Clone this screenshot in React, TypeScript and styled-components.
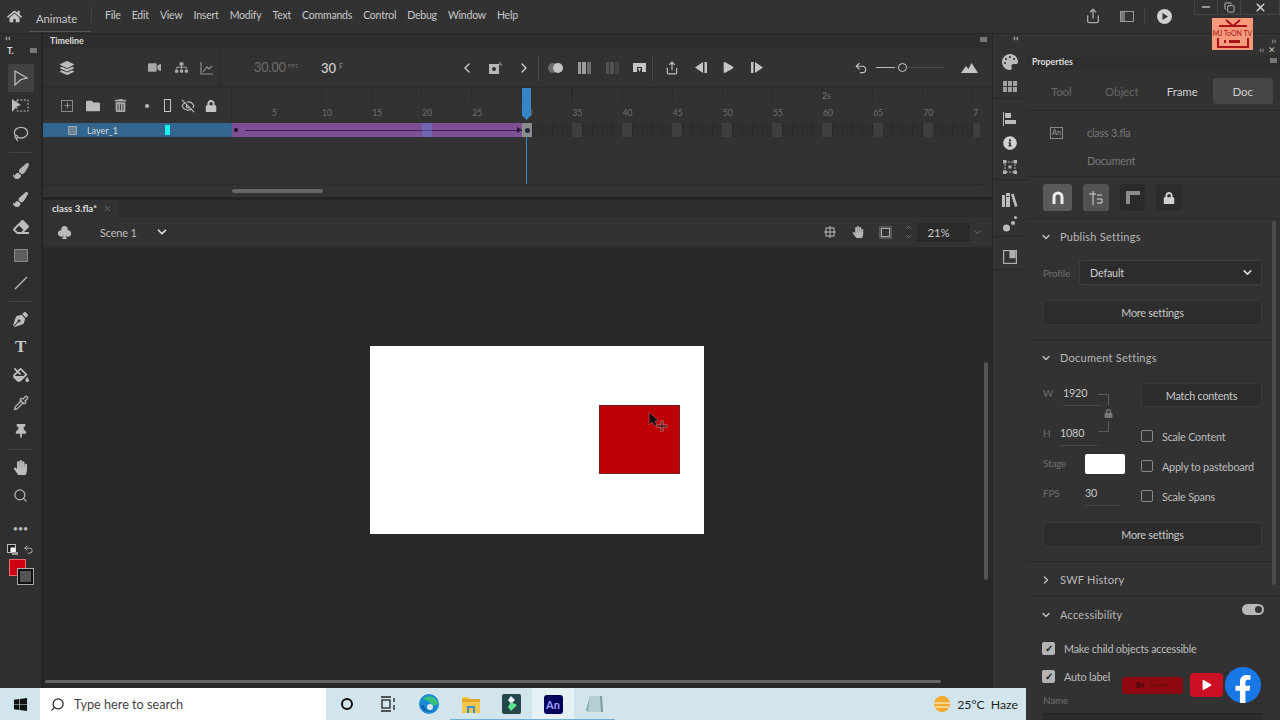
import React from 'react';
import styled, { createGlobalStyle } from 'styled-components';
import {
  ChevronDown, ChevronLeft, ChevronRight, ChevronUp, Copy, EyeOff, Lasso, Minus, Pipette, Plus, Search, Share, Undo2, X,
} from 'lucide-react';
import {
  FaEraser, FaFillDrip, FaFolder, FaHandPaper, FaInfoCircle, FaLayerGroup, FaLock, FaPaintBrush,
  FaPalette, FaPenNib, FaPlay, FaSitemap, FaThumbtack, FaTrashAlt, FaVideo, FaWindows, FaHome,
  FaFacebookF,
} from 'react-icons/fa';
import { BsSuitClubFill } from 'react-icons/bs';

const GlobalStyle = createGlobalStyle`
  html, body {
    margin: 0;
    padding: 0;
    background: #323232;
    overflow: hidden;
  }
  #root {
    width: 1280px;
    height: 720px;
  }
  * {
    box-sizing: border-box;
  }
`;

const labels = [5, 10, 15, 20, 25, 30, 35, 40, 45, 50, 55, 60, 65, 70, 7];
const menus = ['File', 'Edit', 'View', 'Insert', 'Modify', 'Text', 'Commands', 'Control', 'Debug', 'Window', 'Help'];

const ArrowIcon = () => (
  <svg width="16" height="18" viewBox="0 0 16 18" fill="none" stroke="#c4c4c4" strokeWidth="1.2">
    <path d="M2 2 L14 9 L8 10.5 L2 16 Z" />
  </svg>
);
const TransformIcon = () => (
  <svg width="18" height="16" viewBox="0 0 18 16">
    <path d="M0 1 L9 7 L5 8.5 L0 14 Z" fill="#bcbcbc" />
    <rect x="5" y="2" width="11" height="11" fill="none" stroke="#bcbcbc" strokeDasharray="2 1.5" />
  </svg>
);
const GraphIcon = () => (
  <svg width="14" height="14" viewBox="0 0 14 14" fill="none" stroke="#8f8f8f" strokeWidth="1.2">
    <path d="M1 1 V13 H13 M3 11 L7 6 L9 8 L12 5" />
  </svg>
);
const LineIcon = () => (
  <svg width="14" height="14" viewBox="0 0 14 14" stroke="#bcbcbc" strokeWidth="1.2"><path d="M1 13 L13 1" /></svg>
);
const SwapIcon = () => (
  <svg width="12" height="12" viewBox="0 0 12 12">
    <rect x="0.5" y="0.5" width="8" height="8" fill="#222" stroke="#bbb" />
    <rect x="3.5" y="3.5" width="5" height="5" fill="#fff" />
    <rect x="5" y="8" width="6" height="3" fill="#999" />
  </svg>
);
const SwatchGrid = () => (
  <svg width="14" height="11" viewBox="0 0 14 11" fill="#a0a0a0">
    <rect width="4" height="5" /><rect x="5" width="4" height="5" /><rect x="10" width="4" height="5" />
    <rect y="6" width="4" height="5" /><rect x="5" y="6" width="4" height="5" /><rect x="10" y="6" width="4" height="5" />
  </svg>
);
const AlignIcon = () => (
  <svg width="13" height="14" viewBox="0 0 13 14" fill="#bcbcbc">
    <rect width="1" height="14" /><rect x="2" y="1" width="6" height="5" /><rect x="2" y="8" width="11" height="4" />
  </svg>
);
const FrameIcon = () => (
  <svg width="14" height="14" viewBox="0 0 14 14" fill="none" stroke="#b0b0b0">
    <rect x="2" y="2" width="10" height="10" strokeDasharray="2 1" />
    <rect x="0" y="0" width="3" height="3" fill="#b0b0b0" /><rect x="11" y="0" width="3" height="3" fill="#b0b0b0" />
    <rect x="0" y="11" width="3" height="3" fill="#b0b0b0" /><rect x="11" y="11" width="3" height="3" fill="#b0b0b0" />
    <rect x="6" y="6" width="2" height="2" fill="#b0b0b0" />
  </svg>
);
const LibraryIcon = () => (
  <svg width="16" height="14" viewBox="0 0 16 14" fill="#bcbcbc">
    <rect y="2" width="3" height="12" /><rect x="4" y="0" width="4" height="14" />
    <path d="M9 1.5 L11.5 0.5 L15.5 13 L13 14 Z" />
    <rect x="4.8" y="3" width="2.4" height="1" fill="#323232" />
  </svg>
);
const DotsIcon = () => (
  <svg width="14" height="16" viewBox="0 0 14 16" fill="#bcbcbc">
    <circle cx="3.5" cy="12" r="3.5" /><circle cx="10" cy="7" r="2" /><circle cx="12.5" cy="1.5" r="1.5" />
  </svg>
);
const RefIcon = () => (
  <svg width="14" height="14" viewBox="0 0 14 14" fill="none" stroke="#b0b0b0" strokeWidth="1.2">
    <rect x="0.6" y="0.6" width="12.8" height="12.8" /><rect x="7" y="0.6" width="5" height="7" fill="#b0b0b0" />
  </svg>
);
const MountainIcon = () => (
  <svg width="17" height="10" viewBox="0 0 17 10" fill="#c4c4c4"><path d="M0 10 L5 3 L7.5 6 L10.5 0 L17 10 Z" /></svg>
);
const LoopIcon = () => (
  <svg width="13" height="10" viewBox="0 0 13 10" fill="#c4c4c4">
    <path d="M0 0 H13 V9 H9 V4 H4 V9 H0 Z M5 5 H8 L6.5 9 Z" />
  </svg>
);
const OnionIcon = () => (
  <svg width="16" height="10" viewBox="0 0 16 10">
    <circle cx="5" cy="5" r="5" fill="#6a6a6a" /><circle cx="10" cy="5" r="5" fill="#c4c4c4" />
  </svg>
);
const EditFramesIcon = () => (
  <svg width="13" height="12" viewBox="0 0 13 12" fill="#9a9a9a">
    <rect width="3" height="12" /><rect x="4" width="4" height="12" /><rect x="9" width="4" height="12" fill="#6c6c6c" />
  </svg>
);
const StepIcon = ({ flip }: { flip?: boolean }) => (
  <svg width="12" height="11" viewBox="0 0 12 11" fill="#c4c4c4" style={flip ? { transform: 'scaleX(-1)' } : undefined}>
    <rect width="2.5" height="11" /><path d="M4 0 L12 5.5 L4 11 Z" />
  </svg>
);
const KeyAddIcon = () => (
  <svg width="14" height="14" viewBox="0 0 14 14" fill="#b8b8b8">
    <rect y="3" width="10" height="10" /><circle cx="5" cy="8" r="2" fill="#323232" />
    <text x="9" y="5" fontSize="6" fontFamily="Lato, sans-serif">A</text>
  </svg>
);
const PanelIcon = () => (
  <svg width="14" height="11" viewBox="0 0 14 11"><rect x="0.5" y="0.5" width="13" height="10" fill="none" stroke="#999" /><rect x="1" y="1" width="4" height="9" fill="#777" /></svg>
);
const PlayCircle = () => (
  <svg width="15" height="15" viewBox="0 0 15 15"><circle cx="7.5" cy="7.5" r="7.5" fill="#d0d0d0" /><path d="M5.5 4 L11 7.5 L5.5 11 Z" fill="#323232" /></svg>
);
const MagnetIcon = () => (
  <svg width="12" height="13" viewBox="0 0 12 13" fill="none" stroke="#eee" strokeWidth="3"><path d="M2 13 V6 A4 4 0 0 1 10 6 V13" /></svg>
);
const SnapIcon = () => (
  <svg width="14" height="14" viewBox="0 0 14 14" fill="none" stroke="#d8d8d8"><path d="M4 0 V14 M0 3 H7 M8 4 H13 M8 8 H13 V12 H8" /></svg>
);
const RulerIcon = () => (
  <svg width="14" height="13" viewBox="0 0 14 13" fill="#8c8c8c"><path d="M0 0 H14 V4 H4 V13 H0 Z" /></svg>
);
const GuideIcon = () => (
  <svg width="12" height="12" viewBox="0 0 12 12" fill="none" stroke="#b4b4b4" strokeWidth="1.1">
    <rect x="2" y="2" width="8" height="8" /><path d="M6 0 V12 M0 6 H12" />
  </svg>
);
const LinkBracket = () => (
  <svg width="14" height="38" viewBox="0 0 14 38" fill="none" stroke="#5c5c5c"><path d="M0 0.5 H10.5 V11 M10.5 27 V37.5 H0" /></svg>
);
const CursorIcon = () => (
  <svg width="22" height="22" viewBox="0 0 22 22">
    <path d="M1 1 L1 14 L4 11 L7 15 L9 14 L7 10 L11 10 Z" fill="#111" stroke="#d75a66" strokeWidth="0.6" />
    <path d="M14 9.5 V20.5 M8.5 15 H19.5" stroke="#e07a80" strokeWidth="3" />
    <path d="M14 10 V20 M9 15 H19" stroke="#3a1a1a" strokeWidth="1.3" />
  </svg>
);
const EdgeIcon = () => (
  <svg width="20" height="20" viewBox="0 0 20 20">
    <circle cx="10" cy="10" r="10" fill="#1a8ad6" />
    <path d="M4 5 C8 0 17 2 19 9 C19 12 13 12 12 10 C11 7 6 6 4 5 Z" fill="#35c27a" />
    <path d="M5 11 C5 16 11 19 17 16 C13 19 3 19 2 11 Z" fill="#0c5fa8" />
    <circle cx="11" cy="13" r="3" fill="#d5e8ef" />
  </svg>
);
const FolderColor = () => (
  <svg width="18" height="17" viewBox="0 0 18 17">
    <path d="M0 1 H7 L8 3 H18 V17 H0 Z" fill="#f4c84f" /><rect y="3" width="18" height="3" fill="#e0a92e" />
    <path d="M5 17 V10 H13 V17 H11 V12 H7 V17 Z" fill="#3d8fce" />
  </svg>
);
const FilmoraIcon = () => (
  <svg width="19" height="20" viewBox="0 0 19 20">
    <rect width="19" height="20" rx="2" fill="#23474a" />
    <path d="M9 2 L13 6 L9 10 L6 6 Z" fill="#eef" /><path d="M9 8 L15 11 L9 17 L6 13 Z" fill="#5fe38b" />
  </svg>
);
const NoteIcon = () => (
  <svg width="18" height="19" viewBox="0 0 18 19">
    <path d="M4 1 H16 L17 17 L2 17 Z" fill="#b4ced2" /><path d="M4 1 L0 15 L2 17 Z" fill="#7fa7ad" /><path d="M14 1 H16 L17 17 H15 Z" fill="#7e9ba0" />
  </svg>
);
const WeatherIcon = () => (
  <svg width="18" height="17" viewBox="0 0 18 17">
    <circle cx="9" cy="8" r="8" fill="#f3a92c" />
    <path d="M1 7 H17 M2 11 H16" stroke="#f7e2a8" strokeWidth="1.6" />
  </svg>
);
const TaskViewIcon = () => (
  <svg width="16" height="16" viewBox="0 0 16 16" fill="none" stroke="#222" strokeWidth="1.3">
    <rect x="2" y="4" width="8" height="8" /><path d="M1 1 H11 M1 15 H11 M14 2 V6 M14 9 V14" />
  </svg>
);
const TvIcon = () => (
  <svg width="36" height="30" viewBox="0 0 36 30" fill="none" stroke="#a8121a" strokeWidth="2">
    <path d="M11 1 L18 7 L25 1 M4 7 H32 M3 19 V28 H33 V19" />
    <rect x="9" y="21" width="2" height="3" fill="#a8121a" stroke="none" />
    <rect x="14" y="21" width="11" height="3" fill="#a8121a" stroke="none" />
  </svg>
);

function App() {
  return (
    <Page>
      <GlobalStyle />
      <MenuBar>
        <HomeSlot><FaHome size={15} color="#c4c4c4" /></HomeSlot>
        <AppName>Animate</AppName>
        <MenuList>
          {menus.map((m) => <MenuItem key={m}>{m}</MenuItem>)}
        </MenuList>
        <MenuActions>
          <Slot $w={34}><Share size={16} color="#aaa" /></Slot>
          <Slot $w={34}><PanelIcon /></Slot>
          <BarSep $h={18} />
          <Slot $w={39}><PlayCircle /></Slot>
        </MenuActions>
        <WindowButtons>
          <WinBtn><Minus size={12} color="#bbb" strokeWidth={3} /></WinBtn>
          <WinBtn><Copy size={11} color="#bbb" strokeWidth={2} /></WinBtn>
          <WinBtn $wide><X size={13} color="#ccc" strokeWidth={3} /></WinBtn>
        </WindowButtons>
        <Logo>
          <TvIcon />
          <LogoText>MJ ToON TV</LogoText>
        </Logo>
      </MenuBar>

      <Body>
        <LeftArea>
          <Workspace>
            <Tools>
              <CollapseMark $pad={5}>‹‹</CollapseMark>
              <ToolsHead><span>T.</span><GripBox /></ToolsHead>
              <Tool $active><ArrowIcon /></Tool>
              <Tool><TransformIcon /></Tool>
              <Tool><Lasso size={16} color="#b4b4b4" /></Tool>
              <ToolSep />
              <Tool><FaPaintBrush size={16} color="#b4b4b4" /></Tool>
              <Tool><FaPaintBrush size={15} color="#bcbcbc" /></Tool>
              <Tool><FaEraser size={16} color="#bcbcbc" /></Tool>
              <Tool><RectSwatch /></Tool>
              <Tool><LineIcon /></Tool>
              <ToolSep $tight />
              <Tool><FaPenNib size={15} color="#bcbcbc" /></Tool>
              <Tool><ToolT>T</ToolT></Tool>
              <Tool><FaFillDrip size={16} color="#bcbcbc" /></Tool>
              <Tool><Pipette size={16} color="#b4b4b4" /></Tool>
              <Tool><FaThumbtack size={14} color="#bcbcbc" /></Tool>
              <ToolSep $tight />
              <Tool><FaHandPaper size={15} color="#bcbcbc" /></Tool>
              <Tool><Search size={15} color="#b4b4b4" /></Tool>
              <MoreDots>•••</MoreDots>
              <SwapRow><SwapIcon /><Undo2 size={11} color="#bbb" /></SwapRow>
              <Swatches>
                <FillBox />
                <StrokeBox />
              </Swatches>
            </Tools>

            <Center>
              <Timeline>
                <PanelTab>
                  <TabLabel>Timeline</TabLabel>
                  <GripBox />
                </PanelTab>
                <TimeBar>
                  <Slot $w={48}><FaLayerGroup size={14} color="#bbb" /></Slot>
                  <Spacer $w={49} />
                  <Slot $w={28}><FaVideo size={13} color="#a8a8a8" /></Slot>
                  <Slot $w={26}><FaSitemap size={13} color="#a8a8a8" /></Slot>
                  <Slot $w={26}><GraphIcon /></Slot>
                  <FpsBlock>
                    <FpsValue>30.00<small>FPS</small></FpsValue>
                    <FrameValue>30<small>F</small></FrameValue>
                  </FpsBlock>
                  <Slot $w={28}><ChevronLeft size={16} color="#ccc" /></Slot>
                  <Slot $w={29}><KeyAddIcon /></Slot>
                  <Slot $w={28}><ChevronRight size={16} color="#ccc" /></Slot>
                  <BarSep />
                  <Spacer $w={2} />
                  <Slot $w={29}><OnionIcon /></Slot>
                  <Slot $w={28}><EditFramesIcon /></Slot>
                  <Slot $w={28} $dim><EditFramesIcon /></Slot>
                  <Slot $w={26}><LoopIcon /></Slot>
                  <BarSep />
                  <Spacer $w={4} />
                  <Slot $w={30}><Share size={14} color="#c4c4c4" /></Slot>
                  <Slot $w={28}><StepIcon flip /></Slot>
                  <Slot $w={27}><FaPlay size={11} color="#c4c4c4" /></Slot>
                  <Slot $w={29}><StepIcon /></Slot>
                  <Spacer $w={75} />
                  <Slot $w={30}><Undo2 size={14} color="#c4c4c4" /></Slot>
                  <ZoomSlider><ZoomKnob /></ZoomSlider>
                  <Spacer $w={10} />
                  <Slot $w={28}><MountainIcon /></Slot>
                </TimeBar>
                <RulerRow>
                  <LayerTools>
                    <Slot $w={26}><PlusBox><Plus size={9} color="#aaa" /></PlusBox></Slot>
                    <Slot $w={26}><FaFolder size={14} color="#bbb" /></Slot>
                    <Slot $w={28}><FaTrashAlt size={13} color="#a8a8a8" /></Slot>
                    <Slot $w={26}><TinyDot /></Slot>
                    <Slot $w={14}><TallRect /></Slot>
                    <Slot $w={28}><EyeOff size={14} color="#bbb" /></Slot>
                    <Slot $w={18}><FaLock size={12} color="#c4c4c4" /></Slot>
                  </LayerTools>
                  <Ruler>
                    <SecondsMark>2s</SecondsMark>
                    <RulerLabels>
                      {labels.map((n, i) => <RulerLabel key={i}>{n}</RulerLabel>)}
                    </RulerLabels>
                  </Ruler>
                </RulerRow>
                <LayerRow>
                  <LayerName>
                    <LayerGlyph />
                    <span>Layer_1</span>
                    <LayerColor />
                  </LayerName>
                  <Tween>
                    <TweenDot />
                    <TweenLine />
                    <TweenHighlight />
                  </Tween>
                  <Keyframe><KeyDot /></Keyframe>
                  <EmptyFrames />
                </LayerRow>
                <Playhead />
                <TimelineFoot>
                  <HScrollThumb />
                </TimelineFoot>
              </Timeline>

              <StagePanel>
                <DocTabs>
                  <DocTab>class 3.fla*<X size={9} color="#777" /></DocTab>
                </DocTabs>
                <SceneBar>
                  <Slot $w={42}><BsSuitClubFill size={15} color="#bbb" /></Slot>
                  <SceneName>Scene 1</SceneName>
                  <ChevronDown size={14} color="#ddd" strokeWidth={3} />
                  <SceneRight>
                    <Slot $w={28}><GuideIcon /></Slot>
                    <Slot $w={27}><FaHandPaper size={12} color="#b4b4b4" /></Slot>
                    <Slot $w={28}><ClipBox /></Slot>
                    <Slot $w={18}><Steppers><ChevronUp size={9} color="#888" /><ChevronDown size={9} color="#888" /></Steppers></Slot>
                    <ZoomField>21%</ZoomField>
                    <Slot $w={14}><ChevronDown size={11} color="#777" /></Slot>
                  </SceneRight>
                </SceneBar>
                <Canvas>
                  <Artboard>
                    <RedBox />
                    <Cursor><CursorIcon /></Cursor>
                  </Artboard>
                  <CanvasVScroll />
                  <CanvasHScroll />
                </Canvas>
              </StagePanel>
            </Center>

            <Strip>
              <CollapseMark $pad={20}>‹‹</CollapseMark>
              <StripGroup>
                <StripIcon><FaPalette size={16} color="#bcbcbc" /></StripIcon>
                <StripIcon><SwatchGrid /></StripIcon>
              </StripGroup>
              <StripGroup>
                <StripIcon><AlignIcon /></StripIcon>
                <StripIcon><FaInfoCircle size={14} color="#d0d0d0" /></StripIcon>
                <StripIcon><FrameIcon /></StripIcon>
              </StripGroup>
              <StripGroup>
                <StripIcon><LibraryIcon /></StripIcon>
                <StripIcon><DotsIcon /></StripIcon>
              </StripGroup>
              <StripGroup>
                <StripIcon><RefIcon /></StripIcon>
              </StripGroup>
            </Strip>
          </Workspace>

          <Taskbar>
            <WinSlot><FaWindows size={15} color="#111" /></WinSlot>
            <SearchBox>
              <Search size={15} color="#222" style={{ transform: 'scaleX(-1)' }} />
              <span>Type here to search</span>
            </SearchBox>
            <TaskIcon $w={42}><CortanaRing /></TaskIcon>
            <TaskIcon $w={40}><TaskViewIcon /></TaskIcon>
            <TaskIcon $w={42}><EdgeIcon /></TaskIcon>
            <TaskIcon $w={41} $open><FolderColor /></TaskIcon>
            <TaskIcon $w={41} $open><FilmoraIcon /></TaskIcon>
            <TaskIcon $w={42} $open $active><AnBadge>An</AnBadge></TaskIcon>
            <TaskIcon $w={41} $open><NoteIcon /></TaskIcon>
            <Tray>
              <WeatherIcon />
              <span>25°C</span>
              <span>Haze</span>
            </Tray>
          </Taskbar>
        </LeftArea>

        <Properties>
          <PropTop>
            <span>››</span>
            <span>‹‹ &nbsp;✕</span>
          </PropTop>
          <PropTitle>
            <TabLabel>Properties</TabLabel>
            <GripBox />
          </PropTitle>
          <Tabs>
            <PropTab $dim>Tool</PropTab>
            <PropTab $dim>Object</PropTab>
            <PropTab>Frame</PropTab>
            <PropTab $active>Doc</PropTab>
          </Tabs>
          <DocInfo>
            <DocFileRow>
              <AnOutline>An</AnOutline>
              <MutedText>class 3.fla</MutedText>
            </DocFileRow>
            <DocKind>Document</DocKind>
          </DocInfo>
          <SnapRow>
            <SnapBtn $w={29} $bg="#5a5a5a"><MagnetIcon /></SnapBtn>
            <SnapBtn $w={26} $bg="#525252"><SnapIcon /></SnapBtn>
            <SnapBtn $w={25} $bg="#2a2a2a"><RulerIcon /></SnapBtn>
            <SnapBtn $w={26} $bg="#2c2c2c"><FaLock size={12} color="#d0d0d0" /></SnapBtn>
          </SnapRow>

          <Section $h={121}>
            <SectionHead><ChevronDown size={12} color="#bbb" strokeWidth={3} />Publish Settings</SectionHead>
            <ProfileRow>
              <FieldLabel>Profile</FieldLabel>
              <SelectBox>Default<ChevronDown size={13} color="#ddd" strokeWidth={3} /></SelectBox>
            </ProfileRow>
            <WideButton>More settings</WideButton>
          </Section>

          <Section $h={222}>
            <SectionHead><ChevronDown size={12} color="#bbb" strokeWidth={3} />Document Settings</SectionHead>
            <DocGrid>
              <FieldCell>
                <FieldLabel $w={20}>W</FieldLabel>
                <Underlined $w={38}>1920</Underlined>
              </FieldCell>
              <MatchButton>Match contents</MatchButton>
              <FieldCell $top={2}>
                <FieldLabel $w={17}>H</FieldLabel>
                <Underlined $w={38}>1080</Underlined>
              </FieldCell>
              <CheckRow><CheckBox />Scale Content</CheckRow>
              <FieldCell $top={2}>
                <FieldLabel $w={42}>Stage</FieldLabel>
                <StageColor />
              </FieldCell>
              <CheckRow><CheckBox />Apply to pasteboard</CheckRow>
              <FieldCell $top={2}>
                <FieldLabel $w={42}>FPS</FieldLabel>
                <Underlined $w={36}>30</Underlined>
              </FieldCell>
              <CheckRow><CheckBox />Scale Spans</CheckRow>
              <LinkMark><LinkBracket /><LockMark><FaLock size={9} color="#777" /></LockMark></LinkMark>
            </DocGrid>
            <WideButton>More settings</WideButton>
          </Section>

          <Section $h={35}>
            <SectionHead><ChevronRight size={12} color="#bbb" strokeWidth={3} />SWF History</SectionHead>
          </Section>

          <AccessSection>
            <SectionHead>
              <ChevronDown size={12} color="#bbb" strokeWidth={3} />Accessibility
              <Toggle />
            </SectionHead>
            <AccessRow><CheckedBox>✓</CheckedBox>Make child objects accessible</AccessRow>
            <AccessRow><CheckedBox>✓</CheckedBox>Auto label</AccessRow>
            <NameLabel>Name</NameLabel>
            <NameBox />
          </AccessSection>
          <PropScroll />

          <Socials>
            <SubscribePill><FaVideo size={8} color="#5a0a0c" /><span>Subscribe</span></SubscribePill>
            <YoutubeBox><FaPlay size={10} color="#fff" /></YoutubeBox>
            <FacebookBall><FaFacebookF size={28} color="#fff" /></FacebookBall>
          </Socials>
        </Properties>
      </Body>
    </Page>
  );
}

export default App;

const Page = styled.div`
  width: 1280px;
  height: 720px;
  display: flex;
  flex-direction: column;
  background: #323232;
  font-family: Lato, "Liberation Sans", sans-serif;
  color: #c8c8c8;
  font-size: 10.8px;
  letter-spacing: -0.2px;
  position: relative;
  overflow: hidden;
`;

const MenuBar = styled.div`
  height: 33px;
  flex: none;
  display: flex;
  align-items: center;
  position: relative;
  background: #323232;
`;

const HomeSlot = styled.div`
  width: 29px;
  display: flex;
  justify-content: center;
`;

const AppName = styled.div`
  width: 62px;
  padding-left: 7px;
  font-size: 11.4px;
  letter-spacing: -0.1px;
  color: #c4c4c4;
  padding-top: 3px;
  height: 31px;
  line-height: 29px;
  border-bottom: 1px solid #555;
`;

const MenuList = styled.div`
  display: flex;
  gap: 11px;
  padding-left: 13px;
  height: 16px;
  margin-bottom: 3px;
  align-items: center;
  border-left: 1px solid #444;
`;

const MenuItem = styled.span`
  font-size: 10.5px;
  color: #c8c8c8;
`;

const MenuActions = styled.div`
  position: absolute;
  left: 1076px;
  top: 7px;
  display: flex;
  align-items: center;
`;

const WindowButtons = styled.div`
  position: absolute;
  right: 0;
  top: 0;
  height: 15px;
  display: flex;
  border: 1px solid #444;
  border-top: none;
  border-right: none;
`;

const WinBtn = styled.div<{ $wide?: boolean }>`
  width: ${(p) => (p.$wide ? 39 : 23)}px;
  display: flex;
  align-items: center;
  justify-content: center;
  border-right: 1px solid #444;
`;

const Logo = styled.div`
  position: absolute;
  left: 1212px;
  top: 18px;
  width: 41px;
  height: 32px;
  background: #f79a7c;
  z-index: 5;
  display: flex;
  align-items: center;
  justify-content: center;
`;

const LogoText = styled.span`
  position: absolute;
  left: 0;
  right: 0;
  top: 11px;
  text-align: center;
  color: #a8121a;
  font-size: 7px;
  letter-spacing: 0;
  white-space: nowrap;
`;

const Body = styled.div`
  flex: 1;
  display: flex;
  min-height: 0;
`;

const LeftArea = styled.div`
  width: 1026px;
  display: flex;
  flex-direction: column;
`;

const Workspace = styled.div`
  height: 655px;
  display: flex;
  border-top: 1px solid #262626;
`;

const Tools = styled.div`
  width: 43px;
  flex: none;
  display: flex;
  flex-direction: column;
  align-items: center;
  background: #2f2f2f;
  border-right: 2px solid #252525;
`;

const CollapseMark = styled.div<{ $pad: number }>`
  height: 9px;
  width: 100%;
  padding-left: ${(p) => p.$pad}px;
  line-height: 7px;
  font-size: 10px;
  font-weight: 700;
  color: #b4b4b4;
`;

const ToolsHead = styled.div`
  width: 100%;
  height: 21px;
  padding: 2px 4px 0 7px;
  display: flex;
  align-items: flex-start;
  justify-content: space-between;
  font-size: 9px;
  font-weight: 700;
  color: #ddd;
`;

const GripBox = styled.div`
  width: 7px;
  height: 5px;
  margin-top: 3px;
  background: #777;
`;

const Tool = styled.div<{ $active?: boolean }>`
  width: 26px;
  height: 28px;
  flex: none;
  display: flex;
  align-items: center;
  justify-content: center;
  border-radius: 2px;
  background: ${(p) => (p.$active ? '#424242' : 'transparent')};
`;

const ToolSep = styled.div<{ $tight?: boolean }>`
  width: 24px;
  height: 1px;
  flex: none;
  margin: 4px 0 ${(p) => (p.$tight ? 3 : 4)}px;
  background: #444;
`;

const ToolT = styled.span`
  font-family: "Liberation Serif", serif;
  font-size: 17px;
  font-weight: 700;
  color: #c8c8c8;
`;

const RectSwatch = styled.div`
  width: 14px;
  height: 13px;
  background: #5f5f5f;
  border: 1px solid #888;
`;

const MoreDots = styled.div`
  height: 28px;
  margin-top: 6px;
  font-size: 9px;
  line-height: 28px;
  color: #bbb;
  letter-spacing: 0;
`;

const SwapRow = styled.div`
  display: flex;
  gap: 4px;
  height: 13px;
  align-items: center;
`;

const Swatches = styled.div`
  position: relative;
  width: 30px;
  height: 30px;
  margin-top: 3px;
`;

const FillBox = styled.div`
  position: absolute;
  left: 3px;
  top: 0;
  width: 17px;
  height: 17px;
  background: #cf0012;
  border: 1px solid #e66;
`;

const StrokeBox = styled.div`
  position: absolute;
  left: 11px;
  top: 9px;
  width: 17px;
  height: 17px;
  background: #555;
  border: 3px solid #111;
  outline: 1px solid #aaa;
  outline-offset: -1px;
`;

const Center = styled.div`
  width: 950px;
  flex: none;
  display: flex;
  flex-direction: column;
  border-right: 1px solid #252525;
`;

const Timeline = styled.div`
  height: 166px;
  flex: none;
  position: relative;
  display: flex;
  flex-direction: column;
  background: #323232;
  border-bottom: 3px solid #232323;
`;

const PanelTab = styled.div`
  height: 14px;
  display: flex;
  justify-content: space-between;
  padding: 0 5px 0 7px;
  background: #2e2e2e;
  flex: none;
`;

const TabLabel = styled.span`
  font-size: 8.8px;
  letter-spacing: 0;
  font-weight: 700;
  color: #ddd;
  line-height: 13px;
`;

const TimeBar = styled.div`
  height: 40px;
  flex: none;
  display: flex;
  align-items: center;
  border-bottom: 1px solid #2a2a2a;
`;

const Slot = styled.div<{ $w: number; $dim?: boolean }>`
  width: ${(p) => p.$w}px;
  flex: none;
  display: flex;
  align-items: center;
  justify-content: center;
  opacity: ${(p) => (p.$dim ? 0.3 : 1)};
`;

const Spacer = styled.div<{ $w: number }>`
  width: ${(p) => p.$w}px;
  flex: none;
`;

const FpsBlock = styled.div`
  width: 233px;
  flex: none;
  height: 100%;
  padding-left: 33px;
  display: flex;
  align-items: center;
  gap: 24px;
  border-left: 1px solid #2a2a2a;
`;

const FpsValue = styled.span`
  font-size: 12.5px;
  letter-spacing: 0;
  color: #6e6e6e;
  width: 43px;
  white-space: nowrap;
  small {
    font-size: 6px;
    margin-left: 2px;
    vertical-align: 4px;
  }
`;

const FrameValue = styled.span`
  font-size: 13px;
  letter-spacing: 0;
  font-weight: 500;
  color: #d4d4d4;
  small {
    font-size: 7px;
    margin-left: 3px;
    color: #888;
    vertical-align: 4px;
  }
`;

const BarSep = styled.div<{ $h?: number }>`
  width: 1px;
  height: ${(p) => p.$h ?? 26}px;
  flex: none;
  background: #474747;
`;

const ZoomSlider = styled.div`
  width: 69px;
  height: 1px;
  flex: none;
  position: relative;
  background: linear-gradient(90deg, #bbb 0 28%, #4a4a4a 28% 100%);
`;

const ZoomKnob = styled.div`
  position: absolute;
  left: 22px;
  top: -4px;
  width: 9px;
  height: 9px;
  border-radius: 50%;
  border: 1.5px solid #ccc;
  background: #323232;
`;

const RulerRow = styled.div`
  height: 35px;
  flex: none;
  display: flex;
`;

const LayerTools = styled.div`
  width: 189px;
  flex: none;
  padding: 0 0 0 11px;
  display: flex;
  align-items: center;
  border-right: 1px solid #292929;
`;

const PlusBox = styled.div`
  width: 12px;
  height: 12px;
  border: 1px solid #888;
  display: flex;
  align-items: center;
  justify-content: center;
`;

const TinyDot = styled.div`
  width: 4px;
  height: 4px;
  border-radius: 50%;
  background: #bbb;
`;

const TallRect = styled.div`
  width: 7px;
  height: 13px;
  border: 1.5px solid #c4c4c4;
`;

const Ruler = styled.div`
  flex: 1;
  position: relative;
  background: repeating-linear-gradient(90deg, transparent 0 49px, #2b2b2b 49px 50.1px) 40px 0 / auto 14px no-repeat;
`;

const SecondsMark = styled.span`
  position: absolute;
  left: 590px;
  top: 3px;
  font-size: 8.5px;
  letter-spacing: 0;
  color: #777;
`;

const RulerLabels = styled.div`
  position: absolute;
  left: 40px;
  top: 20px;
  display: flex;
`;

const RulerLabel = styled.span`
  width: 50.1px;
  flex: none;
  font-size: 8.5px;
  letter-spacing: 0;
  color: #707070;
`;

const LayerRow = styled.div`
  height: 14px;
  flex: none;
  display: flex;
`;

const LayerName = styled.div`
  width: 189px;
  flex: none;
  display: flex;
  align-items: center;
  padding-left: 25px;
  background: #33668f;
  font-size: 9px;
  letter-spacing: 0;
  color: #d8d8d8;
`;

const LayerGlyph = styled.div`
  width: 9px;
  height: 9px;
  margin-right: 10px;
  background: #6d8497;
  border: 1px solid #9aa;
`;

const LayerColor = styled.div`
  width: 5px;
  height: 10px;
  margin-left: 47px;
  background: #1cf2ee;
`;

const Tween = styled.div`
  width: 290px;
  flex: none;
  position: relative;
  background: #7e4f96;
`;

const TweenDot = styled.div`
  position: absolute;
  left: 2px;
  top: 5px;
  width: 4px;
  height: 4px;
  border-radius: 50%;
  background: #1d1028;
`;

const TweenLine = styled.div`
  position: absolute;
  left: 13px;
  right: 0;
  top: 6.5px;
  height: 1px;
  background: #3a2050;
  &::after {
    content: '';
    position: absolute;
    right: 0;
    top: -2.5px;
    border-left: 5px solid #2a1838;
    border-top: 3px solid transparent;
    border-bottom: 3px solid transparent;
  }
`;

const TweenHighlight = styled.div`
  position: absolute;
  left: 190px;
  top: 0;
  width: 10px;
  height: 100%;
  background: rgba(90, 130, 210, 0.45);
`;

const Keyframe = styled.div`
  width: 10px;
  flex: none;
  display: flex;
  align-items: center;
  justify-content: center;
  background: #8c8c8c;
`;

const KeyDot = styled.div`
  width: 5px;
  height: 5px;
  border-radius: 50%;
  background: #1e2a3a;
`;

const EmptyFrames = styled.div`
  width: 448px;
  flex: none;
  background:
    repeating-linear-gradient(90deg, #3e3e3e 0 10px, transparent 10px 50.1px) 40px 0,
    repeating-linear-gradient(90deg, #282828 0 1px, transparent 1px 10px),
    #303030;
  background-repeat: no-repeat, repeat, repeat;
`;

const Playhead = styled.div`
  position: absolute;
  left: 479px;
  top: 54px;
  width: 9px;
  height: 32px;
  background: #3585c8;
  clip-path: polygon(0 0, 100% 0, 100% 85%, 50% 100%, 0 85%);
  & + div::before {
    content: '';
    position: absolute;
    left: 483px;
    top: 0;
    width: 1px;
    height: 47px;
    background: #3f8ac8;
  }
`;

const TimelineFoot = styled.div`
  flex: 1;
  position: relative;
  &::after {
    content: '';
    position: absolute;
    left: 0;
    right: 10px;
    top: 47px;
    height: 1px;
    background: #2a2a2a;
  }
`;

const HScrollThumb = styled.div`
  position: absolute;
  left: 189px;
  top: 52px;
  width: 91px;
  height: 4px;
  border-radius: 2px;
  background: #666;
`;

const StagePanel = styled.div`
  flex: 1;
  display: flex;
  flex-direction: column;
  min-height: 0;
`;

const DocTabs = styled.div`
  height: 17px;
  flex: none;
  background: #2c2c2c;
`;

const DocTab = styled.div`
  width: 76px;
  height: 100%;
  padding-left: 9px;
  display: flex;
  align-items: center;
  gap: 6px;
  background: #323232;
  font-size: 9.6px;
  letter-spacing: 0;
  font-weight: 700;
  color: #ddd;
  white-space: nowrap;
`;

const SceneBar = styled.div`
  height: 31px;
  flex: none;
  display: flex;
  align-items: center;
  background: #323232;
  border-bottom: 1px solid #2a2a2a;
`;

const SceneName = styled.span`
  margin-left: 15px;
  width: 55px;
  font-size: 11px;
  color: #bdbdbd;
`;

const SceneRight = styled.div`
  margin-left: auto;
  display: flex;
  align-items: center;
  padding-right: 8px;
`;

const ClipBox = styled.div`
  width: 9px;
  height: 9px;
  border: 1.5px solid #aaa;
  outline: 2px solid #555;
`;

const Steppers = styled.div`
  display: flex;
  flex-direction: column;
`;

const ZoomField = styled.div`
  width: 53px;
  height: 19px;
  padding-right: 10px;
  background: #2a2a2a;
  text-align: center;
  line-height: 19px;
  font-size: 11.5px;
  color: #c8c8c8;
`;

const Canvas = styled.div`
  flex: 1;
  position: relative;
  padding: 98px 0 0 327px;
  background: #292929;
`;

const Artboard = styled.div`
  width: 334px;
  height: 188px;
  position: relative;
  background: #fff;
`;

const RedBox = styled.div`
  position: absolute;
  left: 229px;
  top: 59px;
  width: 81px;
  height: 69px;
  background: #bd0005;
  border: 1px solid #7a1d20;
`;

const Cursor = styled.div`
  position: absolute;
  left: 278px;
  top: 65px;
  line-height: 0;
`;

const CanvasVScroll = styled.div`
  position: absolute;
  left: 941px;
  top: 114px;
  width: 4px;
  height: 218px;
  background: #555;
  border-radius: 2px;
`;

const CanvasHScroll = styled.div`
  position: absolute;
  left: 2px;
  bottom: 5px;
  width: 896px;
  height: 3px;
  background: #666;
  border-radius: 2px;
`;

const Strip = styled.div`
  width: 33px;
  flex: none;
  display: flex;
  flex-direction: column;
  background: #323232;
`;

const StripGroup = styled.div`
  display: flex;
  flex-direction: column;
  padding-top: 8px;
  border-bottom: 1px solid #292929;
  &:nth-child(2) {
    padding-top: 7px;
  }
`;

const StripIcon = styled.div`
  height: 24px;
  display: flex;
  align-items: center;
  justify-content: center;
`;

const Taskbar = styled.div`
  flex: 1;
  display: flex;
  align-items: center;
  background: #d2e5ed;
  color: #1a1a1a;
`;

const WinSlot = styled.div`
  width: 40px;
  display: flex;
  justify-content: center;
`;

const SearchBox = styled.div`
  width: 286px;
  height: 100%;
  display: flex;
  align-items: center;
  gap: 9px;
  padding-left: 10px;
  background: #fff;
  font-size: 12.7px;
  letter-spacing: 0;
  color: #444;
`;

const TaskIcon = styled.div<{ $w: number; $active?: boolean; $open?: boolean }>`
  width: ${(p) => p.$w}px;
  height: 100%;
  flex: none;
  display: flex;
  align-items: center;
  justify-content: center;
  background: ${(p) => (p.$active ? '#e6f1f6' : 'transparent')};
  box-shadow: ${(p) => (p.$open ? 'inset 0 -1px 0 #6fb0d4' : 'none')};
`;

const CortanaRing = styled.div`
  width: 12px;
  height: 12px;
  border-radius: 50%;
  border: 2px solid #111;
`;

const AnBadge = styled.div`
  width: 19px;
  height: 19px;
  border-radius: 3px;
  background: #00005b;
  color: #9f9fff;
  font-size: 11px;
  letter-spacing: 0;
  font-weight: 700;
  text-align: center;
  line-height: 19px;
`;

const Tray = styled.div`
  margin-left: auto;
  display: flex;
  align-items: center;
  gap: 6px;
  padding-right: 8px;
  font-size: 12.3px;
  letter-spacing: 0;
  color: #222;
`;

const Properties = styled.div`
  width: 254px;
  flex: none;
  position: relative;
  display: flex;
  flex-direction: column;
  background: #323232;
  border-top: 1px solid #262626;
`;

const PropTop = styled.div`
  height: 21px;
  flex: none;
  padding: 2px 4px 0 0;
  display: flex;
  flex-direction: column;
  align-items: flex-end;
  font-size: 9px;
  line-height: 9px;
  color: #bbb;
`;

const PropTitle = styled.div`
  height: 15px;
  flex: none;
  padding: 0 3px 0 6px;
  display: flex;
  justify-content: space-between;
  background: #2f2f2f;
`;

const Tabs = styled.div`
  height: 41px;
  flex: none;
  display: flex;
  padding: 8px 7px 6px 5px;
  border-bottom: 1px solid #292929;
`;

const PropTab = styled.div<{ $dim?: boolean; $active?: boolean }>`
  flex: 1;
  display: flex;
  align-items: center;
  justify-content: center;
  border-radius: 3px;
  font-size: 11.5px;
  letter-spacing: -0.1px;
  color: ${(p) => (p.$dim ? '#666' : '#d0d0d0')};
  background: ${(p) => (p.$active ? '#464646' : 'transparent')};
`;

const DocInfo = styled.div`
  height: 66px;
  flex: none;
  padding-top: 15px;
  border-bottom: 1px solid #292929;
`;

const DocFileRow = styled.div`
  display: flex;
  align-items: center;
  padding-left: 24px;
`;

const AnOutline = styled.div`
  width: 13px;
  height: 12px;
  border: 1px solid #888;
  font-size: 7.5px;
  line-height: 10px;
  text-align: center;
  color: #999;
  margin-right: 24px;
`;

const MutedText = styled.span`
  font-size: 10.8px;
  color: #777;
`;

const DocKind = styled(MutedText)`
  display: block;
  margin: 15px 0 0 61px;
`;

const SnapRow = styled.div`
  height: 42px;
  flex: none;
  display: flex;
  gap: 11px;
  padding: 7px 0 0 17px;
  border-bottom: 1px solid #292929;
`;

const SnapBtn = styled.div<{ $w: number; $bg: string }>`
  width: ${(p) => p.$w}px;
  height: 27px;
  display: flex;
  align-items: center;
  justify-content: center;
  border-radius: 3px;
  background: ${(p) => p.$bg};
`;

const Section = styled.div<{ $h: number }>`
  height: ${(p) => p.$h}px;
  flex: none;
  padding: 0 18px 0 17px;
  border-bottom: 1px solid #292929;
`;

const SectionHead = styled.div`
  height: 35px;
  display: flex;
  align-items: center;
  gap: 8px;
  margin-left: -3px;
  font-size: 11px;
  letter-spacing: 0.25px;
  color: #b8b8b8;
  position: relative;
`;

const ProfileRow = styled.div`
  display: flex;
  align-items: center;
  height: 25px;
  margin: 6px 0 15px;
`;

const FieldLabel = styled.span<{ $w?: number }>`
  width: ${(p) => p.$w ?? 36}px;
  flex: none;
  font-size: 10px;
  color: #6e6e6e;
`;

const SelectBox = styled.div`
  flex: 1;
  height: 25px;
  padding: 0 7px 0 10px;
  display: flex;
  align-items: center;
  justify-content: space-between;
  background: #2c2c2c;
  border: 1px solid #3d3d3d;
  border-radius: 2px;
  color: #cfcfcf;
`;

const WideButton = styled.div`
  height: 25px;
  background: #2d2d2d;
  border: 1px solid #383838;
  border-radius: 2px;
  text-align: center;
  line-height: 23px;
  color: #c8c8c8;
`;

const DocGrid = styled.div`
  position: relative;
  display: grid;
  grid-template-columns: 98px 1fr;
  grid-template-rows: 38px 30px 30px 30px;
  margin: 8px 0 11px;
`;

const FieldCell = styled.div<{ $top?: number }>`
  display: flex;
  align-items: flex-start;
  height: 26px;
  padding-top: ${(p) => p.$top ?? 0}px;
  line-height: 20px;
`;

const Underlined = styled.span<{ $w: number }>`
  width: ${(p) => p.$w}px;
  height: 23px;
  border-bottom: 1px solid #444;
  color: #c8c8c8;
`;

const MatchButton = styled(WideButton)`
  height: 24px;
`;

const CheckRow = styled.div`
  display: flex;
  align-items: center;
  gap: 9px;
  color: #bdbdbd;
  white-space: nowrap;
`;

const CheckBox = styled.div`
  width: 12px;
  height: 12px;
  border: 1.5px solid #8a8a8a;
  border-radius: 2px;
`;

const StageColor = styled.div`
  width: 40px;
  height: 20px;
  border-radius: 2px;
  background: #fff;
  margin-top: 1px;
`;

const LinkMark = styled.div`
  position: absolute;
  left: 55px;
  top: 11px;
  line-height: 0;
`;

const LockMark = styled.div`
  position: absolute;
  left: 6px;
  top: 15px;
`;

const AccessSection = styled.div`
  flex: 1;
  padding: 0 18px 0 17px;
  position: relative;
`;

const Toggle = styled.div`
  position: absolute;
  right: -2px;
  top: 7px;
  width: 22px;
  height: 11px;
  border-radius: 6px;
  background: #b8b8b8;
  &::after {
    content: '';
    position: absolute;
    right: 2px;
    top: 2px;
    width: 7px;
    height: 7px;
    border-radius: 50%;
    background: #333;
  }
`;

const AccessRow = styled.div`
  height: 28px;
  display: flex;
  align-items: center;
  gap: 9px;
  color: #bdbdbd;
  ${SectionHead} + & {
    margin-top: 2px;
  }
`;

const CheckedBox = styled.div`
  width: 13px;
  height: 13px;
  margin-left: -1px;
  border-radius: 2px;
  background: #b4b4b4;
  color: #222;
  font-size: 10px;
  font-weight: 700;
  line-height: 13px;
  text-align: center;
`;

const NameLabel = styled.div`
  font-size: 10px;
  color: #6e6e6e;
  margin-top: 4px;
`;

const NameBox = styled.div`
  height: 14px;
  margin-top: 7px;
  background: #2b2b2b;
  border-top: 1px solid #242424;
`;

const PropScroll = styled.div`
  position: absolute;
  right: 4px;
  top: 187px;
  width: 4px;
  height: 364px;
  border-radius: 2px;
  background: #4c4c4c;
`;

const Socials = styled.div`
  position: absolute;
  left: 96px;
  top: 632px;
  width: 140px;
  height: 38px;
  display: flex;
  align-items: center;
`;

const SubscribePill = styled.div`
  width: 61px;
  height: 17px;
  display: flex;
  align-items: center;
  justify-content: center;
  gap: 5px;
  border-radius: 3px;
  background: #8f0a10;
  font-size: 5px;
  color: #5a0a0c;
`;

const YoutubeBox = styled.div`
  width: 33px;
  height: 24px;
  margin-left: 7px;
  display: flex;
  align-items: center;
  justify-content: center;
  border-radius: 4px;
  background: #cc0f24;
`;

const FacebookBall = styled.div`
  width: 36px;
  height: 36px;
  margin-left: 2px;
  display: flex;
  align-items: flex-end;
  justify-content: center;
  border-radius: 50%;
  background: #1a78e6;
  overflow: hidden;
`;
